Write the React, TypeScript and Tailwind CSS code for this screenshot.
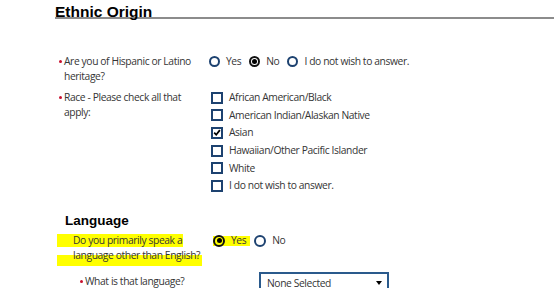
import type { ReactNode } from 'react'

const RACES = [
  { label: 'African American/Black', checked: false },
  { label: 'American Indian/Alaskan Native', checked: false },
  { label: 'Asian', checked: true },
  { label: 'Hawaiian/Other Pacific Islander', checked: false },
  { label: 'White', checked: false },
  { label: 'I do not wish to answer.', checked: false },
]

function Bullet() {
  return <span className="mt-[6px] size-[3px] shrink-0 rounded-full bg-[#c8102e]" />
}

function Radio({ checked, size = 11 }: { checked?: boolean; size?: number }) {
  return (
    <span
      className={`flex shrink-0 items-center justify-center rounded-full border-2 ${
        checked ? 'border-[#111]' : 'border-[#1d4270]'
      } ${size === 12 ? 'size-[12px]' : 'size-[11px]'}`}
    >
      {checked && <span className="size-[5px] rounded-full bg-black" />}
    </span>
  )
}

function Option({ checked, size, children }: { checked?: boolean; size?: number; children: ReactNode }) {
  return (
    <label className="flex items-center gap-[6px]">
      <Radio checked={checked} size={size} />
      <span>{children}</span>
    </label>
  )
}

function Checkbox({ checked }: { checked: boolean }) {
  return (
    <span className="flex size-[12px] shrink-0 items-center justify-center border-2 border-[#1d4270] bg-white">
      {checked && (
        <svg viewBox="0 0 10 10" className="size-[9px]">
          <path d="M1.5 5.2 L4 7.8 L8.6 2" fill="none" stroke="#000" strokeWidth="2.2" />
        </svg>
      )}
    </span>
  )
}

export default function App() {
  return (
    <div className="h-[288px] w-[554px] overflow-hidden bg-white pl-[55px] font-['Open_Sans',sans-serif] text-[10.3px] leading-[15px] tracking-[-0.4px] text-[#353535]">
      <h1 className="h-[19px] border-b-2 border-[#8c8c8c] pt-[4px] font-['Liberation_Sans',Arial,sans-serif] text-[15.5px] leading-[15px] font-bold tracking-normal text-black">
        Ethnic Origin
      </h1>

      {/* hispanic / latino */}
      <div className="mt-[35px] grid grid-cols-[154px_1fr]">
        <div className="flex gap-[2px] pl-[4px]">
          <Bullet />
          <span className="w-[140px]">Are you of Hispanic or Latino heritage?</span>
        </div>
        <div className="flex h-[15px] items-center gap-[8px]">
          <Option>Yes</Option>
          <Option checked>No</Option>
          <Option>I do not wish to answer.</Option>
        </div>
      </div>

      {/* race */}
      <div className="mt-[5px] grid grid-cols-[156px_1fr]">
        <div className="flex gap-[2px] pt-[1px] pl-[4px]">
          <Bullet />
          <span className="w-[140px]">Race - Please check all that apply:</span>
        </div>
        <div className="flex flex-col">
          {RACES.map((r) => (
            <label key={r.label} className="flex h-[17.6px] items-center gap-[6px]">
              <Checkbox checked={r.checked} />
              <span>{r.label}</span>
            </label>
          ))}
        </div>
      </div>

      <h2 className="mt-[18.5px] pl-[10px] font-['Liberation_Sans',Arial,sans-serif] text-[13.5px] leading-[16px] font-bold tracking-normal text-black">
        Language
      </h2>

      {/* language question, marked with highlighter */}
      <div className="relative mt-[4px] grid grid-cols-[158px_1fr]">
        <span className="absolute top-[1px] left-[2px] h-[12.5px] w-[126px] bg-[#ffff00]" />
        <span className="absolute top-[21.5px] left-[2px] h-[11.5px] w-[145px] bg-[#ffff00]" />
        <span className="absolute top-[2.5px] left-[157.5px] h-[10.5px] w-[37.5px] bg-[#ffff00]" />
        <div className="relative pl-[18px]">
          <span className="block w-[136px]">Do you primarily speak a language other than English?</span>
        </div>
        <div className="relative flex h-[15px] items-center gap-[8px]">
          <Option checked size={12}>
            Yes
          </Option>
          <Option size={12}>No</Option>
        </div>
      </div>

      <div className="mt-[9px] grid grid-cols-[204px_1fr]">
        <div className="flex gap-[2px] pt-[2px] pl-[25px]">
          <Bullet />
          <span>What is that language?</span>
        </div>
        <div className="flex h-[22px] w-[130px] items-center justify-between border-2 border-[#2a5a8c] pr-[5px] pl-[6px]">
          <span>None Selected</span>
          <span className="h-0 w-0 border-x-[3.5px] border-t-[4px] border-x-transparent border-t-black" />
        </div>
      </div>
    </div>
  )
}
